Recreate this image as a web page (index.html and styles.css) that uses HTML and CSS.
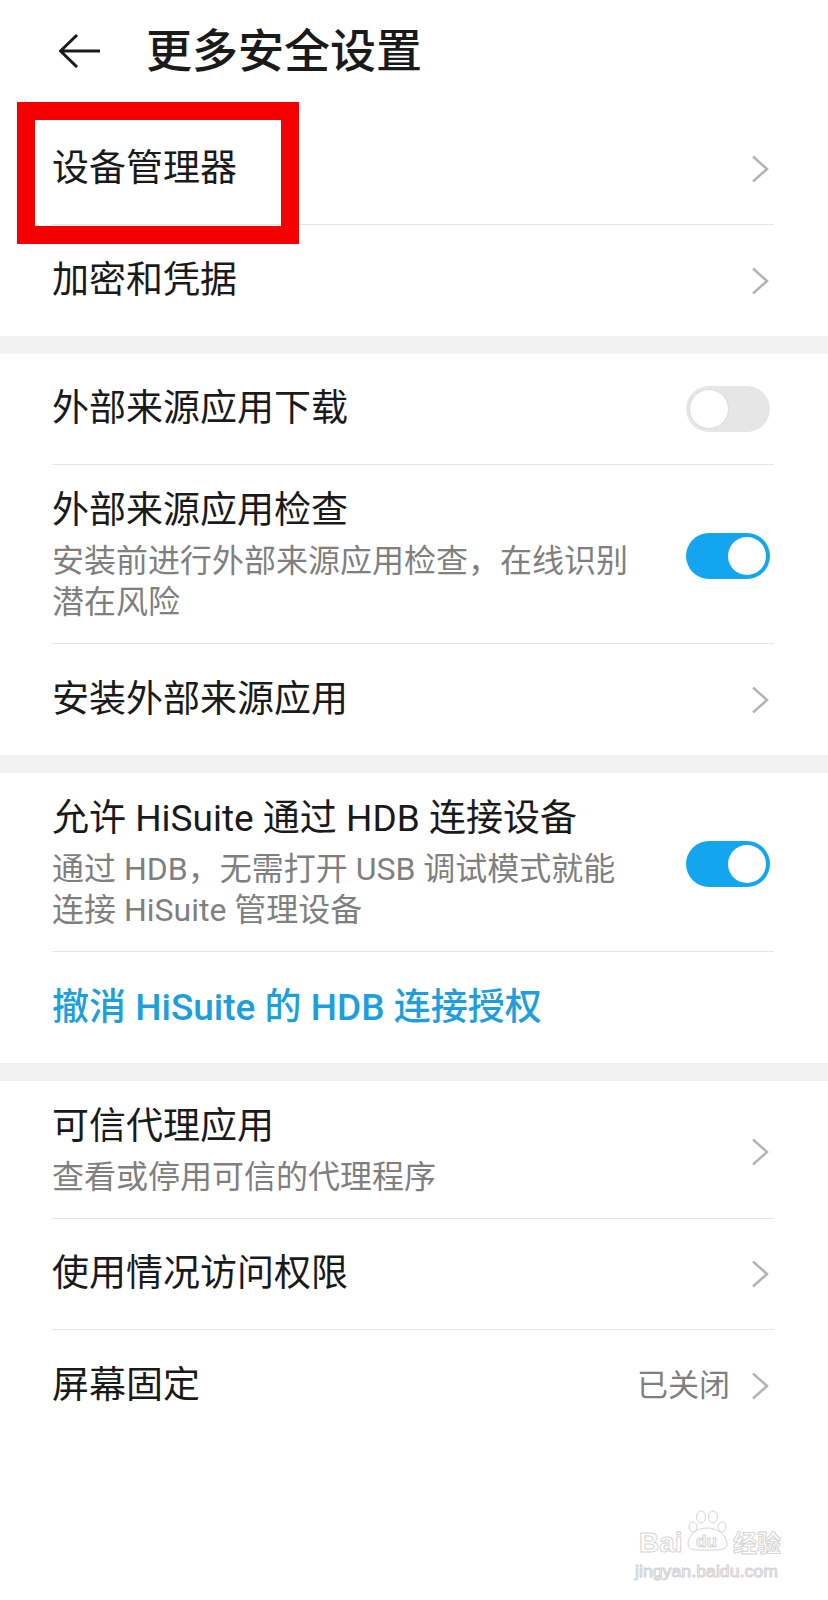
FILE: index.html
```html
<!DOCTYPE html>
<html lang="zh-CN">
<head>
<meta charset="utf-8">
<title>更多安全设置</title>
<link rel="stylesheet" href="styles.css">
</head>
<body>
<div class="screen">
  <header class="bar">
    <svg class="back" width="42" height="34" viewBox="0 0 42 34"><path d="M41 17H1.5M18 1L1.5 17L18 33" fill="none" stroke="#1a1a1a" stroke-width="3" stroke-linejoin="round"/></svg>
    <h1 class="page-title">更多安全设置</h1>
  </header>

  <section class="group">
    <div class="row"><span class="title">设备管理器</span><svg class="chev" width="20" height="28" viewBox="0 0 20 28"><polyline points="3,1.5 17,14 3,26.5" fill="none" stroke="#b3b3b3" stroke-width="2.5"/></svg></div>
    <div class="row"><span class="title">加密和凭据</span><svg class="chev" width="20" height="28" viewBox="0 0 20 28"><polyline points="3,1.5 17,14 3,26.5" fill="none" stroke="#b3b3b3" stroke-width="2.5"/></svg></div>
  </section>
  <div class="band"></div>

  <section class="group">
    <div class="row"><span class="title">外部来源应用下载</span><span class="switch"><span class="knob"></span></span></div>
    <div class="row multi">
      <div class="text"><span class="title">外部来源应用检查</span><span class="sub">安装前进行外部来源应用检查，在线识别潜在风险</span></div>
      <span class="switch on"><span class="knob"></span></span>
    </div>
    <div class="row"><span class="title">安装外部来源应用</span><svg class="chev" width="20" height="28" viewBox="0 0 20 28"><polyline points="3,1.5 17,14 3,26.5" fill="none" stroke="#b3b3b3" stroke-width="2.5"/></svg></div>
  </section>
  <div class="band"></div>

  <section class="group">
    <div class="row multi">
      <div class="text"><span class="title">允许 HiSuite 通过 HDB 连接设备</span><span class="sub">通过 HDB，无需打开 USB 调试模式就能连接 HiSuite 管理设备</span></div>
      <span class="switch on"><span class="knob"></span></span>
    </div>
    <div class="row"><span class="title link">撤消 HiSuite 的 HDB 连接授权</span></div>
  </section>
  <div class="band"></div>

  <section class="group">
    <div class="row multi">
      <div class="text"><span class="title">可信代理应用</span><span class="sub">查看或停用可信的代理程序</span></div>
      <svg class="chev" width="20" height="28" viewBox="0 0 20 28"><polyline points="3,1.5 17,14 3,26.5" fill="none" stroke="#b3b3b3" stroke-width="2.5"/></svg>
    </div>
    <div class="row"><span class="title">使用情况访问权限</span><svg class="chev" width="20" height="28" viewBox="0 0 20 28"><polyline points="3,1.5 17,14 3,26.5" fill="none" stroke="#b3b3b3" stroke-width="2.5"/></svg></div>
    <div class="row"><span class="title">屏幕固定</span><span class="end"><span class="value">已关闭</span><svg class="chev" width="20" height="28" viewBox="0 0 20 28"><polyline points="3,1.5 17,14 3,26.5" fill="none" stroke="#b3b3b3" stroke-width="2.5"/></svg></span></div>
  </section>

  <div class="mark"></div>

  <svg class="watermark" width="160" height="85" viewBox="0 0 160 85">
    <g fill="#ffffff" stroke="#d4d4d4" stroke-width="1">
      <text x="9" y="52" font-family="Liberation Sans, sans-serif" font-weight="bold" font-size="28">Bai</text>
      <ellipse cx="63" cy="27" rx="4" ry="5"/>
      <ellipse cx="71" cy="17" rx="4.5" ry="6"/>
      <ellipse cx="83" cy="17" rx="4.5" ry="6"/>
      <ellipse cx="92" cy="27" rx="4" ry="5"/>
      <path d="M58 44 C58 34 68 28 77 28 C86 28 97 34 97 44 C97 50 90 50 77 50 C64 50 58 50 58 44 Z"/>
      <text x="66" y="47" font-family="Liberation Sans, sans-serif" font-weight="bold" font-size="17">du</text>
      <text x="103" y="52" font-family="Noto Sans CJK SC, sans-serif" font-weight="bold" font-size="24">经验</text>
      <text x="5" y="77" font-family="Liberation Sans, sans-serif" font-size="16" textLength="143" lengthAdjust="spacingAndGlyphs">jingyan.baidu.com</text>
    </g>
  </svg>
</div>
</body>
</html>
```

FILE: styles.css
```css
html, body {
  margin: 0;
  padding: 0;
  background: #ffffff;
}

.screen {
  position: relative;
  width: 828px;
  min-height: 1600px;
  font-family: Roboto, "Noto Sans CJK SC", sans-serif;
  color: #1a1a1a;
}

.bar {
  height: 102px;
  margin-bottom: 12px;
  display: flex;
  align-items: center;
  padding-left: 59px;
}

.back {
  flex: none;
  display: block;
}

.page-title {
  margin: 0 0 0 45px;
  font-size: 46px;
  line-height: 60px;
  font-weight: 500;
  color: #1a1a1a;
}

.group {
  background: #ffffff;
}

.band {
  height: 18px;
  background: #f2f2f2;
}

.row {
  display: flex;
  align-items: center;
  justify-content: space-between;
  gap: 50px;
  min-height: 111px;
  box-sizing: border-box;
  margin: 0 54px 0 52px;
  border-bottom: 1px solid #e6e6e6;
}

.row:last-child {
  border-bottom: 0;
}

.row.multi {
  padding: 24px 0 20px;
}

.text {
  flex: 1;
  display: flex;
  flex-direction: column;
}

.title {
  font-size: 37px;
  line-height: 44px;
  color: #1a1a1a;
}

.title.link {
  color: #1e9fdc;
  font-weight: 500;
}

.sub {
  margin-top: 8px;
  font-size: 32px;
  line-height: 41px;
  color: #7f7f7f;
}

.chev {
  flex: none;
  display: block;
  margin-right: 4px;
}

.end {
  display: flex;
  align-items: center;
}

.value {
  font-size: 31px;
  line-height: 40px;
  color: #7f7f7f;
  margin-right: 20px;
}

.switch {
  flex: none;
  display: flex;
  align-items: center;
  width: 84px;
  height: 46px;
  box-sizing: border-box;
  padding: 0 4px;
  margin-right: 4px;
  border-radius: 23px;
  background: #e6e6e6;
}

.switch.on {
  justify-content: flex-end;
  background: #14a5f0;
}

.knob {
  width: 38px;
  height: 38px;
  border-radius: 50%;
  background: #ffffff;
  box-shadow: 0 0 0 1px #dcdcdc;
}

.switch.on .knob {
  box-shadow: none;
}

.mark {
  position: absolute;
  left: 17px;
  top: 102px;
  width: 282px;
  height: 142px;
  box-sizing: border-box;
  border: 18.5px solid #f40000;
}

.watermark {
  position: absolute;
  left: 630px;
  top: 1500px;
}
```
